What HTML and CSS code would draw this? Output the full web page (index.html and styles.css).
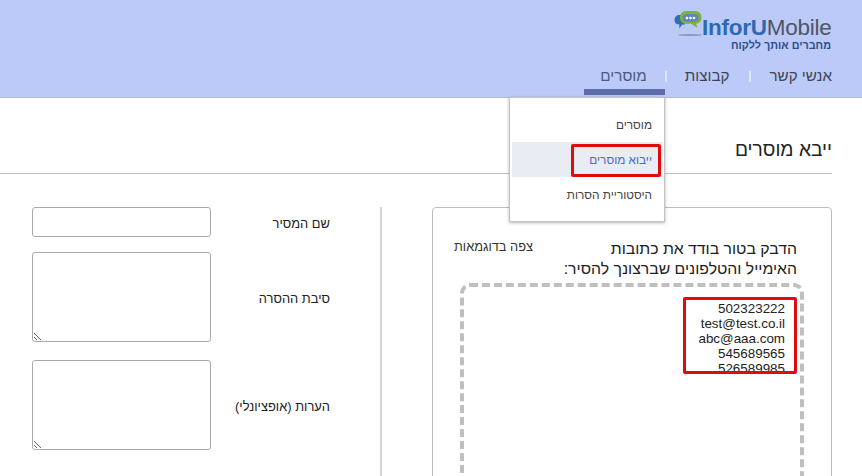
FILE: index.html
```html
<!DOCTYPE html>
<html lang="he" dir="rtl">
<head>
<meta charset="utf-8">
<title>ייבא מוסרים</title>
<link rel="stylesheet" href="styles.css">
</head>
<body>
<header class="top">
  <div class="logo">
    <div class="logo-row">
      <svg class="logo-icon" width="30" height="26" viewBox="0 0 30 26">
        <path d="M1.500 9C1.500 6 3.500 4 6.500 4H12v9.500H9.500L6 17.500l.5-4C3.500 13.500 1.500 12 1.500 9Z" fill="#2f6fb5"/>
        <path d="M7 6.500C7 3 9.500 0 13 0h9c4 0 6.500 2.500 6.500 6.500 0 3.500-2 6-5.500 6.300l1.500 4-6.500-4H13C9.500 12.800 7 10 7 6.500Z" fill="#7fb23a"/>
        <path d="M9.500 7C9.500 4.500 11.500 3 14 3h7.500C24 3 25.500 4.700 25.500 7s-1.500 3.800-4 3.800H14C11.500 10.800 9.500 9.500 9.500 7Z" fill="#5f87b8"/>
        <circle cx="14" cy="7" r="1.300" fill="#fff"/><circle cx="17.500" cy="7" r="1.300" fill="#fff"/><circle cx="21" cy="7" r="1.300" fill="#fff"/>
        <ellipse cx="17" cy="24" rx="12" ry="1.100" fill="#8e9bb8"/>
      </svg>
      <span class="brand" dir="ltr"><b>InforU</b>Mobile</span>
    </div>
    <div class="tagline">מחברים אותך ללקוח</div>
  </div>
  <nav class="nav">
    <a class="nav-item">אנשי קשר</a>
    <span class="nav-sep"></span>
    <a class="nav-item">קבוצות</a>
    <span class="nav-sep nav-sep-last"></span>
    <a class="nav-item active">מוסרים</a>
  </nav>
</header>

<ul class="menu">
  <li class="menu-item">מוסרים</li>
  <li class="menu-item current">ייבוא מוסרים</li>
  <li class="menu-item">היסטוריית הסרות</li>
</ul>
<div class="mark mark-menu"></div>

<main class="page">
  <h1 class="title">ייבא מוסרים</h1>
  <div class="columns">
    <section class="panel">
      <div class="panel-head">
        <p class="instructions">הדבק בטור בודד את כתובות<br>האימייל והטלפונים שברצונך להסיר:</p>
        <a class="examples">צפה בדוגמאות</a>
      </div>
      <div class="drop">
        <div class="list" dir="ltr">502323222<br>test@test.co.il<br>abc@aaa.com<br>545689565<br>526589985</div>
        <div class="mark mark-list"></div>
      </div>
    </section>
    <section class="form">
      <div class="row row-input">
        <label class="label">שם המסיר</label>
        <input class="field" type="text">
      </div>
      <div class="row row-reason">
        <label class="label">סיבת ההסרה</label>
        <textarea class="field area"></textarea>
      </div>
      <div class="row">
        <label class="label">הערות (אופציונלי)</label>
        <textarea class="field area"></textarea>
      </div>
    </section>
  </div>
</main>
</body>
</html>
```
FILE: styles.css
```css
* { box-sizing: border-box; }
html, body { margin: 0; height: 476px; overflow: hidden; }
body { position: relative; background: #fff; color: #222; font-family: "Liberation Sans", Arial, sans-serif; }

.top { height: 98px; background: #bccafa; border-bottom: 1px solid #b4bdd8; padding: 11px 30px 0 0; }
.logo { width: 158px; height: 46px; }
.logo-row { display: flex; direction: ltr; align-items: flex-start; height: 26px; }
.logo-icon { flex: none; margin-left: -1px; }
.brand { font-size: 22.500px; line-height: 26px; letter-spacing: -0.250px; color: #4f5563; margin-top: 4px; margin-left: -1px; white-space: nowrap; }
.brand b { color: #2e68b0; font-weight: 700; }
.tagline { font-size: 10.800px; font-weight: 700; line-height: 14px; color: #2c4f8c; padding-right: 1px; margin-top: 1px; }

.nav { display: flex; height: 29px; margin-top: 9px; }
.nav-item { height: 29px; font-size: 15.200px; line-height: 20px; color: #3d4452; white-space: nowrap; }
.nav-sep { width: 2px; height: 11px; margin: 5px 18px 0 20px; background: #dfe5fb; }
.nav-sep-last { margin-left: 0; }
.nav-item.active { width: 81px; padding: 0 18px; color: #4a5a78; border-bottom: 6px solid #5b6ea8; }

.menu { position: absolute; top: 97px; left: 509px; width: 156px; height: 125px; margin: 0; padding: 9px 1px 9px 2px; list-style: none; background: #fff; border: 1px solid #c4c4c4; box-shadow: 0 1px 3px rgba(0,0,0,.3); }
.menu-item { height: 35px; font-size: 11.800px; line-height: 37px; color: #444; padding-right: 11px; }
.menu-item.current { background: #e9ecf2; color: #4a68c8; }
.mark { position: absolute; border: 3px solid #e00b0b; border-radius: 2px; }
.mark-menu { top: 144px; left: 571px; width: 90px; height: 33px; }

.page { height: 378px; overflow: hidden; padding: 40px 30px 0 0; }
.title { margin: 0; height: 36px; border-bottom: 1px solid #bdbdbd; font-size: 19.200px; font-weight: 400; line-height: 24px; color: #222; }
.columns { display: flex; margin-top: 33px; }
.panel { width: 400px; height: 300px; border: 1px solid #bcbcbc; border-radius: 4px; flex: none; }
.panel-head { display: flex; justify-content: space-between; padding: 29px 34px 0 21px; height: 75px; }
.instructions { margin: 2px 0 0; font-size: 15.800px; line-height: 20px; color: #222; }
.examples { font-size: 12.800px; line-height: 20px; color: #333; }
.drop { position: relative; margin: 0 27px; height: 240px; border: 4px dashed #bfbfbf; border-radius: 10px; }
.list { height: 86px; overflow: hidden; text-align: right; font-size: 13.400px; line-height: 15px; color: #222; padding: 14px 15px 0 0; }
.mark-list { top: 10px; right: 3px; width: 114px; height: 77px; }

.form { flex: 1; margin-right: 50px; border-right: 2px solid #d4d4d4; padding: 0 50px 0 0; margin-left: 32px; height: 300px; }
.row { display: flex; align-items: center; justify-content: space-between; }
.row-input { margin-bottom: 15px; }
.row-reason { margin-bottom: 18px; }
.label { font-size: 12.900px; line-height: 16px; padding-top: 3px; color: #222; white-space: nowrap; }
.field { display: block; width: 179px; height: 30px; margin: 0; background: #fff; border: 1px solid #aaa; border-radius: 3px; padding: 0; font: inherit; }
.area { height: 90px; }
```
